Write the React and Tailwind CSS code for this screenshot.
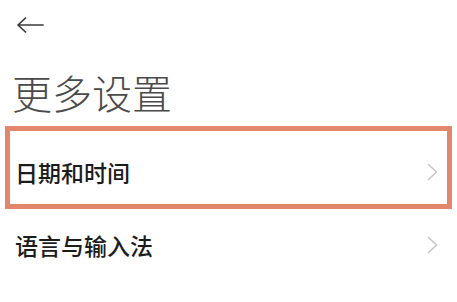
import React from "react";

const Chevron = () => (
  <svg width="11" height="18" viewBox="0 0 11 18" fill="none">
    <path d="M1.5 1.5 L9.5 9 L1.5 16.5" stroke="#c6c6c6" strokeWidth="1.6" strokeLinecap="round" strokeLinejoin="round" />
  </svg>
);

const App = () => {
  const font = { fontFamily: '"Noto Sans CJK SC", "Noto Sans", sans-serif' };
  return (
    <div className="w-[457px] h-[302px] bg-white overflow-hidden" style={font}>
      {/* top bar */}
      <div className="h-[68px] pl-[17px] pt-[17px]">
        <svg width="27" height="16" viewBox="0 0 27 16" fill="none">
          <path d="M1 8 H26 M8.5 1 L1 8 L8.5 15" stroke="#3a3a3a" strokeWidth="1.7" strokeLinecap="round" strokeLinejoin="round" />
        </svg>
      </div>

      {/* title */}
      <h1 className="h-[48px] leading-[48px] pl-[12px] text-[40px] font-light text-[#4a4a4a]">更多设置</h1>

      {/* highlighted row */}
      <div className="mt-[10px] mx-[5px] h-[83px] border-[5px] border-[#e2876b] flex items-center justify-between pl-[5px] pr-[9px] pt-[9px]">
        <span className="text-[23px] font-medium text-[#1c1c1c]">日期和时间</span>
        <Chevron />
      </div>

      {/* plain row */}
      <div className="h-[72px] flex items-center justify-between pl-[15px] pr-[19px]">
        <span className="text-[23px] font-medium text-[#1c1c1c]">语言与输入法</span>
        <Chevron />
      </div>
    </div>
  );
};

export default App;
